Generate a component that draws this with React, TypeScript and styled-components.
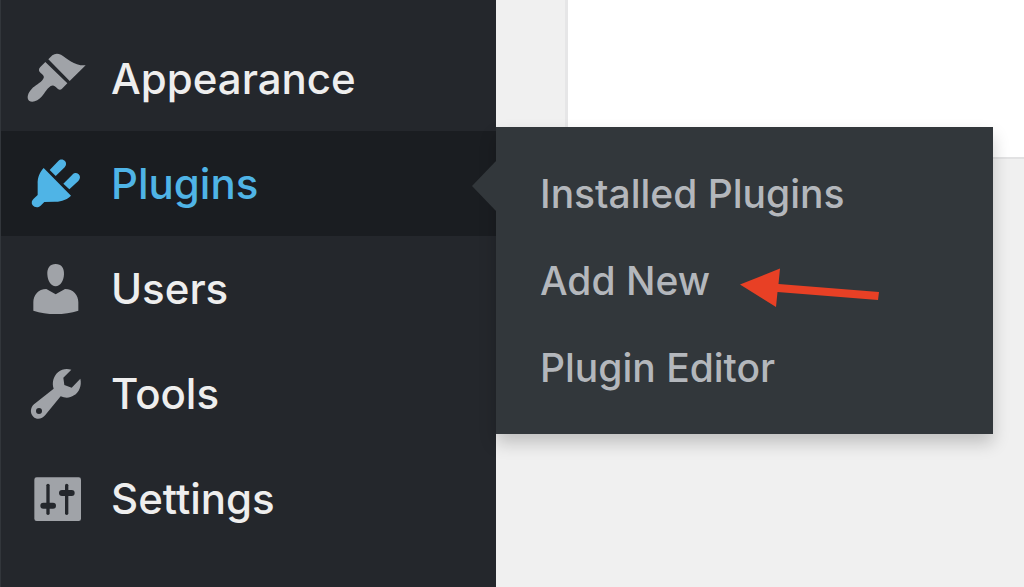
import React from "react";
import styled, { createGlobalStyle } from "styled-components";

const GlobalStyle = createGlobalStyle`
  *, *::before, *::after { box-sizing: border-box; }
  body {
    margin: 0;
    background: #f0f0f0;
    font-family: Inter, "Liberation Sans", sans-serif;
    font-weight: 500;
    overflow-x: hidden;
  }
`;

const Page = styled.div`
  display: flex;
  min-height: 100vh;
`;

const Sidebar = styled.nav`
  flex: 0 0 auto;
  width: 496px;
  padding: 26px 0;
  background: #24272c;
  border-left: 1px solid #32363b;
`;

const MenuList = styled.ul`
  margin: 0;
  padding: 0;
  list-style: none;
`;

const MenuItem = styled.li<{ $active?: boolean }>`
  position: relative;
  background: ${(p) => (p.$active ? "#1a1d21" : "transparent")};
`;

const MenuLink = styled.a<{ $active?: boolean }>`
  display: flex;
  align-items: center;
  gap: 22px;
  height: 105px;
  padding-left: 23px;
  color: ${(p) => (p.$active ? "#4fb4e6" : "#eeeeee")};
  font-size: 42px;
  line-height: 48px;
  text-decoration: none;
`;

const Icon = styled.svg<{ $active?: boolean }>`
  flex: none;
  width: 65px;
  height: 65px;
  fill: ${(p) => (p.$active ? "#4fb4e6" : "#a0a3a8")};
`;

const Flyout = styled.ul`
  position: absolute;
  z-index: 1;
  top: -4px;
  left: 100%;
  width: 497px;
  margin: 0;
  padding: 23px 0;
  list-style: none;
  background: #32373b;
  box-shadow: 0 9px 16px rgba(0, 0, 0, 0.2);

  &::before {
    content: "";
    position: absolute;
    top: 34px;
    right: 100%;
    border: solid transparent;
    border-width: 25px 24px 25px 0;
    border-right-color: #32373b;
  }
`;

const FlyoutLink = styled.a`
  display: flex;
  align-items: center;
  gap: 30px;
  height: 87px;
  padding-left: 44px;
  color: #b4b7bc;
  font-size: 39px;
  line-height: 48px;
  text-decoration: none;
`;

const Pointer = styled.svg`
  flex: none;
  width: 140px;
  height: 52px;
  fill: #e84025;
`;

const Content = styled.main`
  flex: 1;
  min-width: 0;
  padding-left: 69px;
`;

const Card = styled.section`
  height: 159px;
  background: #fff;
  border-left: 3px solid #e6e6e7;
  border-bottom: 2px solid #e2e2e3;
`;

const icons = {
  appearance: (
    <path d="M85 58 L97 46 Q108 37 123 44 C142 55 163 78 197 76 L149 123 Z M76 66 L142 130 L126 146 Q120 152 113 146 C105 137 99 133 91 139 C79 148 76 157 66 169 C54 183 37 189 27 182 C19 174 24 158 35 147 C45 136 61 130 69 118 C75 109 70 106 62 99 Q52 91 61 81 Z" />
  ),
  plugins: (
    <path d="M71 69 L153 152 C142 163 123 171 104 170 L73 171 L61 183 C53 190 43 187 38 181 C33 174 35 166 41 161 L53 150 L53 117 C52 98 60 80 71 69 Z M89 75 L115 48 C122 41 130 43 135 48 C140 54 139 61 134 67 L107 93 Z M130 116 L157 89 C163 83 170 83 176 88 C182 94 181 102 175 108 L148 133 Z" />
  ),
  users: (
    <path d="M107 42 C124 42 133 54 132 73 C131 93 121 109 107 109 C93 109 83 93 82 73 C81 54 90 42 107 42 Z M79 117 L107 133 L135 117 C160 117 175 136 175 157 L175 182 Q143 192 107 192 Q71 192 40 182 L40 157 C40 136 55 117 79 117 Z" />
  ),
  tools: (
    <path
      fillRule="evenodd"
      d="M154 44 L130 68 L133 90 L155 98 L181 71 C186 92 177 112 162 121 C149 130 136 130 122 124 L76 180 C67 192 50 195 40 185 C29 175 31 158 42 148 L101 101 C95 84 100 64 114 52 C126 42 139 40 154 44 Z M57 159 A9 9 0 1 0 57 177 A9 9 0 1 0 57 159 Z"
    />
  ),
  settings: (
    <>
      <rect x="43" y="52" width="140" height="131" rx="7" />
      <g fill="#24272c">
        <rect x="79" y="71" width="10" height="94" rx="5" />
        <rect x="61" y="128" width="47" height="18" rx="9" />
        <rect x="135" y="71" width="10" height="94" rx="5" />
        <rect x="117" y="90" width="47" height="18" rx="9" />
      </g>
    </>
  ),
};

type IconName = keyof typeof icons;

const items: { icon: IconName; label: string }[] = [
  { icon: "appearance", label: "Appearance" },
  { icon: "plugins", label: "Plugins" },
  { icon: "users", label: "Users" },
  { icon: "tools", label: "Tools" },
  { icon: "settings", label: "Settings" },
];

const pluginLinks = ["Installed Plugins", "Add New", "Plugin Editor"];

function PluginFlyout() {
  return (
    <Flyout>
      {pluginLinks.map((label) => (
        <li key={label}>
          <FlyoutLink href="#">
            {label}
            {label === "Add New" && (
              <Pointer viewBox="0 0 140 52" aria-hidden="true">
                <path d="M0 29.5 L40 13.5 L38.5 29 L139 37 L138 45 L37.5 37 L36 52 Z" />
              </Pointer>
            )}
          </FlyoutLink>
        </li>
      ))}
    </Flyout>
  );
}

export default function App() {
  return (
    <Page>
      <GlobalStyle />
      <Sidebar aria-label="Main menu">
        <MenuList>
          {items.map(({ icon, label }) => {
            const active = icon === "plugins";
            return (
              <MenuItem key={icon} $active={active}>
                <MenuLink href="#" $active={active}>
                  <Icon viewBox="12 18 195 195" $active={active} aria-hidden="true">
                    {icons[icon]}
                  </Icon>
                  {label}
                </MenuLink>
                {active && <PluginFlyout />}
              </MenuItem>
            );
          })}
        </MenuList>
      </Sidebar>
      <Content>
        <Card />
      </Content>
    </Page>
  );
}
